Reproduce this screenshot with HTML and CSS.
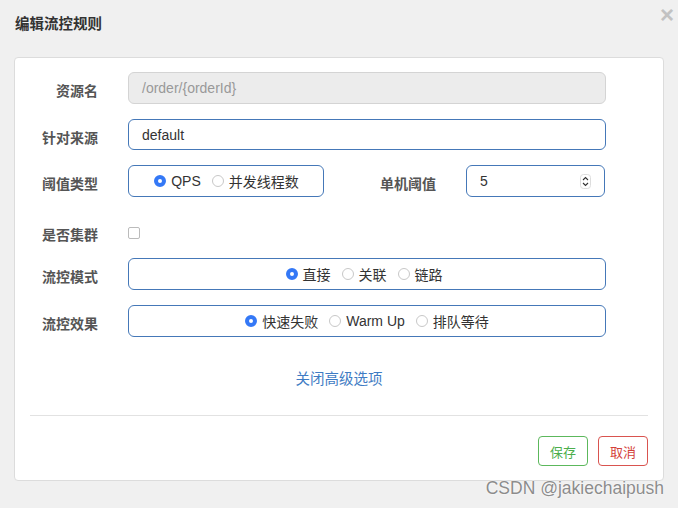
FILE: index.html
```html
<!DOCTYPE html>
<html lang="zh">
<head>
<meta charset="utf-8">
<title>编辑流控规则</title>
<link rel="stylesheet" href="styles.css">
</head>
<body>
<div class="dialog">
  <div class="header">
    <h3 class="title">编辑流控规则</h3>
    <span class="close">×</span>
  </div>
  <div class="card">
    <div class="form">
      <div class="row">
        <label class="label">资源名</label>
        <div class="field"><div class="input disabled">/order/{orderId}</div></div>
      </div>
      <div class="row">
        <label class="label">针对来源</label>
        <div class="field"><div class="input active">default</div></div>
      </div>
      <div class="row">
        <label class="label">阈值类型</label>
        <div class="field split">
          <div class="radios small">
            <span class="opt"><i class="radio on"></i>QPS</span>
            <span class="opt"><i class="radio"></i>并发线程数</span>
          </div>
          <label class="label inner">单机阈值</label>
          <div class="input active number">5<span class="spin"><svg width="11" height="15" viewBox="0 0 11 15"><rect x="0.5" y="0.5" width="10" height="14" rx="3" fill="#fff" stroke="#ddd"/><path d="M3 6 L5.5 3.5 L8 6" fill="none" stroke="#333" stroke-width="1.1"/><path d="M3 9 L5.5 11.5 L8 9" fill="none" stroke="#333" stroke-width="1.1"/></svg></span></div>
        </div>
      </div>
      <div class="row check-row">
        <label class="label">是否集群</label>
        <div class="field"><span class="checkbox"></span></div>
      </div>
      <div class="row">
        <label class="label">流控模式</label>
        <div class="field">
          <div class="radios wide mode">
            <span class="opt"><i class="radio on"></i>直接</span>
            <span class="opt"><i class="radio"></i>关联</span>
            <span class="opt"><i class="radio"></i>链路</span>
          </div>
        </div>
      </div>
      <div class="row">
        <label class="label">流控效果</label>
        <div class="field">
          <div class="radios wide">
            <span class="opt"><i class="radio on"></i>快速失败</span>
            <span class="opt"><i class="radio"></i>Warm Up</span>
            <span class="opt"><i class="radio"></i>排队等待</span>
          </div>
        </div>
      </div>
    </div>
    <div class="advanced"><a class="link">关闭高级选项</a></div>
    <div class="divider"></div>
    <div class="footer">
      <button class="btn save">保存</button>
      <button class="btn cancel">取消</button>
    </div>
  </div>
  <div class="watermark">CSDN @jakiechaipush</div>
</div>
</body>
</html>
```

FILE: styles.css
```css
* { box-sizing: border-box; }
html, body {
  margin: 0;
  padding: 0;
  background: #f0f0f0;
  font-family: "Liberation Sans", "Noto Sans CJK SC", sans-serif;
  color: #333;
}
.dialog {
  width: 678px;
  height: 508px;
  padding: 0 14px;
  position: relative;
}
.header {
  height: 57px;
  display: flex;
  align-items: flex-start;
  justify-content: space-between;
}
.title {
  margin: 15px 0 0 1px;
  font-size: 14.5px;
  font-weight: bold;
  color: #333;
  line-height: 18px;
}
.close {
  margin: 2px -10px 0 0;
  font-size: 24px;
  font-weight: bold;
  color: #c2c2c2;
  line-height: 26px;
}
.card {
  background: #fff;
  border: 1px solid #dcdcdc;
  border-radius: 4px;
  height: 424px;
  padding: 14px 15px 0 15px;
}
.form {
  display: flex;
  flex-direction: column;
  gap: 15px;
}
.row {
  display: flex;
  align-items: center;
  height: 32px;
}
.row:nth-child(2) { height: 31px; }
.label {
  width: 68px;
  text-align: right;
  font-size: 14px;
  font-weight: bold;
  color: #555;
  padding-top: 6px;
  line-height: 20px;
  flex: none;
}
.field {
  margin-left: 30px;
  width: 478px;
  height: 100%;
  display: flex;
  align-items: center;
}
.input {
  width: 100%;
  height: 100%;
  border: 1px solid #ccc;
  border-radius: 6px;
  padding: 0 13px;
  font-size: 14px;
  display: flex;
  align-items: center;
  color: #333;
}
.input.disabled {
  background: #ececec;
  color: #999;
  border-color: #d4d4d4;
}
.input.active {
  border-color: #4578b8;
}
.split { justify-content: flex-start; }
.radios {
  height: 100%;
  border: 1px solid #4578b8;
  border-radius: 6px;
  display: flex;
  align-items: center;
  justify-content: center;
  font-size: 14px;
  color: #333;
  gap: 11px;
}
.radios.small { width: 196px; flex: none; padding-left: 1px; }
.radios.wide { width: 100%; }
.radios.mode { padding-right: 6px; }
.opt {
  display: inline-flex;
  align-items: center;
}
.radio {
  width: 12px;
  height: 12px;
  border-radius: 50%;
  border: 1px solid #c8c8c8;
  background: #fff;
  margin-right: 5px;
  display: inline-block;
}
.radio.on {
  border: 4px solid #3478f6;
  background: #fff;
}
.label.inner {
  width: 112px;
  margin-left: 0;
}
.number {
  width: 139px;
  margin-left: 30px;
  flex: none;
  justify-content: space-between;
  padding-right: 13px;
}
.spin { display: flex; align-items: center; }
.check-row {
  margin-top: 4px;
  margin-bottom: -5px;
}
.checkbox {
  width: 12px;
  height: 12px;
  border: 1px solid #bbb;
  border-radius: 2px;
  background: #fff;
  margin-top: 2px;
}
.advanced {
  text-align: center;
  margin-top: 32px;
  height: 20px;
  line-height: 20px;
}
.link {
  color: #3f7cc4;
  font-size: 14.5px;
}
.divider {
  height: 1px;
  background: #e2e2e2;
  margin: 26px 0 0 0;
}
.footer {
  display: flex;
  justify-content: flex-end;
  gap: 10px;
  margin-top: 20px;
}
.btn {
  width: 50px;
  height: 30px;
  background: #fff;
  border-radius: 4px;
  font-family: "Liberation Sans", "Noto Sans CJK SC", sans-serif;
  font-size: 13px;
  padding: 0;
}
.save { border: 1px solid #5cb85c; color: #4cae4c; }
.cancel { border: 1px solid #d9534f; color: #d43f3a; }
.watermark {
  position: absolute;
  right: 14px;
  top: 478px;
  font-size: 17.5px;
  line-height: 20px;
  color: #8c8c8c;
  text-shadow: 0 0 2px #fff, 0 0 1px #fff;
}
```
